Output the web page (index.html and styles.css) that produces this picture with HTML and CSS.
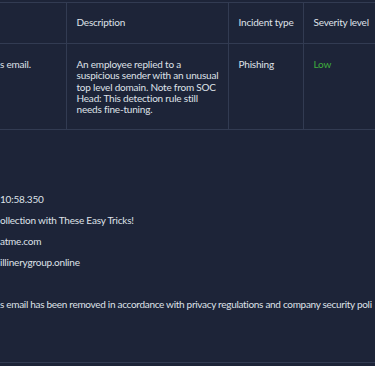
FILE: index.html
```html
<!DOCTYPE html>
<html lang="en">
<head>
  <meta charset="UTF-8">
  <meta name="viewport" content="width=device-width, initial-scale=1.0">
  <title>Incident details</title>
  <link rel="stylesheet" href="styles.css">
</head>
<body>

  <!-- incident table -->
  <table class="incident-table">
    <thead>
      <tr>
        <th class="col-summary"></th>
        <th class="col-desc">Description</th>
        <th class="col-type">Incident type</th>
        <th class="col-sev">Severity level</th>
      </tr>
    </thead>
    <tbody>
      <tr>
        <td>s email.</td>
        <td>An employee replied to a suspicious sender with an unusual top level domain. Note from SOC Head: This detection rule still needs fine-tuning.</td>
        <td>Phishing</td>
        <td class="sev-low">Low</td>
      </tr>
    </tbody>
  </table>

  <!-- email details -->
  <section class="details">
    <div class="fields">
      <p>10:58.350</p>
      <p>ollection with These Easy Tricks!</p>
      <p>atme.com</p>
      <p>illinerygroup.online</p>
    </div>
    <p class="note">s email has been removed in accordance with privacy regulations and company security poli</p>
  </section>

</body>
</html>
```

FILE: styles.css
```css
:root {
  --bg-color: #1d2438;
  --line-color: #323b52;
  --text-color: #dfe2e8;
  --low-color: #3fae3c;
}

body {
  margin: 0;
  padding: 0;
  background-color: var(--bg-color);
  color: var(--text-color);
  font-family: 'Lato', sans-serif;
  font-size: 10px;
  letter-spacing: -0.2px;
  overflow: hidden;
  height: 366px;
}

/* ===== table ===== */
.incident-table {
  margin-top: 2px;
  border-collapse: collapse;
  table-layout: fixed;
  width: 375px;
}
.incident-table th,
.incident-table td {
  box-sizing: border-box;
  border: 1px solid var(--line-color);
  text-align: left;
  padding: 0 8px 0 10px;
  line-height: 11.3px;
}
.incident-table tr > :first-child {
  border-left: none;
  padding-left: 0;
}
.incident-table tr > :last-child {
  border-right: none;
}
.incident-table th {
  font-weight: 400;
  height: 41px;
  vertical-align: middle;
  white-space: nowrap;
}
.incident-table td {
  height: 86px;
  padding-top: 15px;
  padding-bottom: 14px;
  vertical-align: top;
}
.col-summary { width: 66px; }
.col-desc { width: 162px; }
.col-type { width: 75px; }
.col-sev { width: 72px; }

.sev-low {
  color: var(--low-color);
}

/* ===== details ===== */
.details {
  border-bottom: 1px solid var(--line-color);
  height: 232px;
}
.fields {
  padding-top: 59px;
}
.fields p {
  margin: 0;
  line-height: 21px;
}
.note {
  margin: 21px 0 0;
  line-height: 21px;
  letter-spacing: -0.3px;
  white-space: nowrap;
}
```
